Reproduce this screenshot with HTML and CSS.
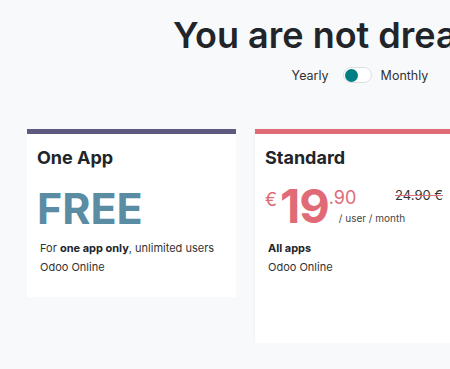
FILE: index.html
```html
<!DOCTYPE html>
<html lang="en">
  <head>
    <meta charset="UTF-8" />
    <meta name="viewport" content="width=device-width, initial-scale=1.0" />
    <title>Pricing</title>
    <link rel="stylesheet" href="styles.css">
  </head>
  <body>
    <div class="page">
      <h1>You are not dreaming</h1>
      <div class="billing-toggle">
        <span>Yearly</span>
        <span class="switch"><span class="knob"></span></span>
        <span>Monthly</span>
      </div>
      <div class="plans">
        <div class="plan plan-one">
          <h2>One App</h2>
          <div class="free">FREE</div>
          <div class="details">
            <p>For <b>one app only</b>, unlimited users</p>
            <p>Odoo Online</p>
          </div>
        </div>
        <div class="plan plan-standard">
          <h2>Standard</h2>
          <div class="price-row">
            <div class="price">
              <span class="currency">€</span>
              <span class="amount">19</span>
              <span class="cents-wrap">
                <span class="cents">.90</span>
                <span class="per">/ user / month</span>
              </span>
            </div>
            <div class="old-price">24.90 €</div>
          </div>
          <div class="details">
            <p><b>All apps</b></p>
            <p>Odoo Online</p>
          </div>
        </div>
        <div class="plan plan-custom">
          <h2>Custom</h2>
        </div>
      </div>
    </div>
  </body>
</html>
```

FILE: styles.css
```css
body {
  margin: 0;
  background-color: #f8f9fb;
  font-family: Inter, "Noto Sans", sans-serif;
  color: #212529;
  overflow: hidden;
}
.page {
  width: 720px;
  padding-top: 14px;
}
h1 {
  margin: 0 0 0 -4px;
  text-align: center;
  font-size: 36px;
  font-weight: 600;
  line-height: 42px;
  white-space: nowrap;
}
.billing-toggle {
  display: flex;
  justify-content: center;
  align-items: center;
  margin-top: 11px;
  font-size: 12.5px;
  color: #333;
}
.switch {
  display: flex;
  align-items: center;
  width: 25px;
  height: 14px;
  margin: 0 9px 0 14px;
  padding: 0 1px;
  border: 1px solid #dcdfe4;
  border-radius: 8px;
  background: #fff;
}
.knob {
  width: 13px;
  height: 13px;
  border-radius: 50%;
  background: #017e84;
}
.plans {
  display: flex;
  align-items: flex-start;
  gap: 19px;
  padding: 0 27px;
  margin-top: 46px;
}
.plan {
  width: 209px;
  flex-shrink: 0;
  box-sizing: border-box;
  padding: 13px 10px 20px;
  background: #fff;
  border-top: 5px solid #5c5a7e;
  white-space: nowrap;
}
.plan-standard {
  border-top-color: #e06b77;
  min-height: 214px;
  box-shadow: -1px 0 3px rgba(0, 0, 0, 0.04);
}
.plan-custom {
  border-top-color: #017e84;
}
h2 {
  margin: 0;
  font-size: 18px;
  font-weight: 700;
  line-height: 22px;
}
.free {
  margin-top: 14px;
  font-size: 43px;
  font-weight: 700;
  line-height: 50px;
  color: #5a8ca3;
}
.details {
  margin-top: 6px;
  padding-left: 3px;
  font-size: 11px;
  color: #333;
}
.details p {
  margin: 0;
  line-height: 19px;
}
.details b {
  color: #212529;
}
.price-row {
  display: flex;
  justify-content: space-between;
  align-items: flex-start;
  margin-top: 15px;
  height: 49px;
  color: #e06b77;
}
.price {
  display: flex;
  align-items: flex-start;
}
.currency {
  font-size: 18px;
  line-height: 22px;
  margin-top: 5px;
  margin-right: 3px;
}
.amount {
  font-size: 47px;
  font-weight: 700;
  line-height: 50px;
  letter-spacing: -1px;
  margin-top: -3px;
}
.cents-wrap {
  display: flex;
  flex-direction: column;
  align-items: flex-start;
}
.cents {
  font-size: 18px;
  line-height: 22px;
  margin-top: 3px;
}
.per {
  font-size: 10px;
  color: #444;
  margin: 3px -60px 0 10px;
}
.old-price {
  margin-top: 3px;
  margin-right: 11px;
  font-size: 13px;
  color: #333;
  text-decoration: line-through;
  text-decoration-color: #e06b77;
}
```
